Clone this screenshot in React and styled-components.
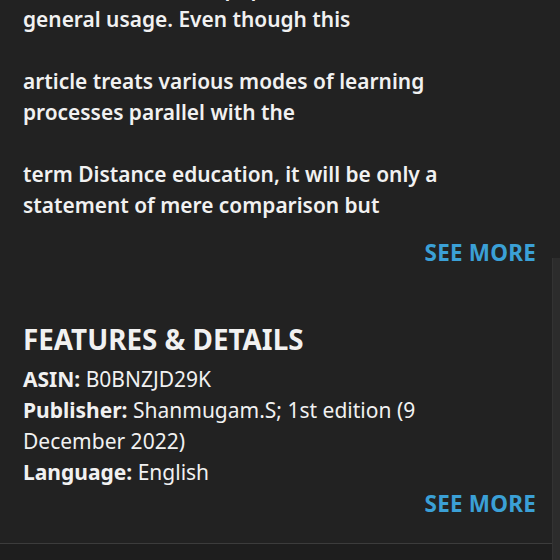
import styled, { createGlobalStyle } from 'styled-components';

const Global = createGlobalStyle`
html, body {
  margin: 0;
  padding: 0;
  background: #222222;
}
body {
  font-family: "Noto Sans", "Open Sans", sans-serif;
  color: #f1f1f1;
}
`;

const Screen = styled.div`
position: relative;
width: 560px;
height: 560px;
overflow: hidden;
background: #222222;
display: flex;
flex-direction: column;
`;

const Section = styled.div`
padding: 0 24px 0 23px;
display: flex;
flex-direction: column;
`;

const Description = styled(Section)`
margin-top: -27px;
`;

const Para = styled.p`
margin: 0 0 31px 0;
font-size: 20.9px;
line-height: 31px;
font-weight: 600;
&:last-of-type {
  margin-bottom: 0;
}
`;

const Line = styled.span`
display: block;
white-space: nowrap;
`;

const SeeMore = styled.div`
align-self: flex-end;
margin-top: ${p => p.$top}px;
color: #3ba0d6;
font-size: 22.5px;
line-height: 31px;
font-weight: 700;
letter-spacing: 0.2px;
`;

const Heading = styled.h2`
margin: 54px 0 8px 0;
font-size: 27.8px;
line-height: 34px;
font-weight: 700;
`;

const Detail = styled.div`
font-size: 21px;
line-height: 31px;
font-weight: 400;
b {
  font-weight: 700;
}
`;

const Footer = styled.div`
margin-top: auto;
height: 16px;
border-top: 1px solid #3c3c3c;
background: #1e1e1e;
`;

const Thumb = styled.div`
position: absolute;
right: 0;
top: 258px;
bottom: 0;
width: 7px;
background: #2c2c2c;
border-left: 1px solid #333333;
`;

const paragraphs = [
  ['is used as a term in popular', 'general usage. Even though this'],
  ['article treats various modes of learning', 'processes parallel with the'],
  ['term Distance education, it will be only a', 'statement of mere comparison but'],
];

export default function App() {
  return (
    <Screen>
      <Global />
      <Description>
        {paragraphs.map((lines, i) => (
          <Para key={i}>
            {lines.map((l, j) => <Line key={j}>{l}</Line>)}
          </Para>
        ))}
        <SeeMore $top={16}>SEE MORE</SeeMore>
      </Description>
      <Section>
        <Heading>FEATURES &amp; DETAILS</Heading>
        <Detail><b>ASIN:</b> B0BNZJD29K</Detail>
        <Detail><b>Publisher:</b> Shanmugam.S; 1st edition (9<br />December 2022)</Detail>
        <Detail><b>Language:</b> English</Detail>
        <SeeMore $top={0}>SEE MORE</SeeMore>
      </Section>
      <Footer />
      <Thumb />
    </Screen>
  );
}
